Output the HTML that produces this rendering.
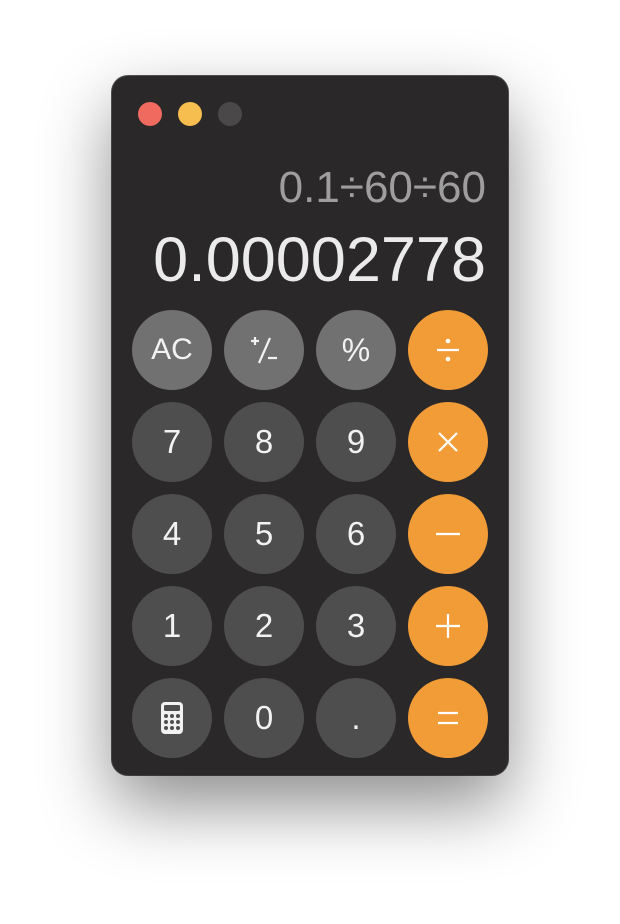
<!DOCTYPE html>
<html><head><style>
body{margin:0;width:620px;height:924px;background:#fff;position:relative;overflow:hidden;font-family:"Liberation Sans",sans-serif}
.win{position:absolute;left:112px;top:76px;width:396px;height:699px;background:#2a2829;border-radius:16px;box-shadow:0 30px 70px rgba(0,0,0,.45),0 0 0 1px #555;}
.tl{position:absolute;top:102px;width:24px;height:24px;border-radius:50%}
.b{position:absolute;width:80px;height:80px;border-radius:50%;background:#4f4e4f;color:#f2f2f2;font-size:33px;display:flex;align-items:center;justify-content:center}
.g{background:#727172}.o{background:#f29c38}
.t{position:absolute;right:134px;white-space:nowrap;text-align:right}
</style></head><body>
<div class="win"></div>
<div class="tl" style="left:138px;background:#f06a5f"></div>
<div class="tl" style="left:178px;background:#f6be4f"></div>
<div class="tl" style="left:218px;background:#4a4849"></div>
<div class="t" style="top:163px;font-size:44px;color:#9f9e9f">0.1÷60÷60</div>
<div class="t" style="top:224px;font-size:63px;color:#ebebeb">0.00002778</div>

<div class="b g" style="left:132px;top:310px;font-size:30px">AC</div>
<div class="b g" style="left:224px;top:310px"><svg width="40" height="40" viewBox="0 0 40 40" stroke="#f2f2f2" stroke-width="2.2" fill="none"><path d="M7 11h8M11 7v8M26 8L15 33M24 28h9"/></svg></div>
<div class="b g" style="left:316px;top:310px;font-size:32px">%</div>
<div class="b o" style="left:408px;top:310px"><svg width="40" height="40" viewBox="0 0 40 40"><path d="M9 20h22" stroke="#fff" stroke-width="2.2"/><circle cx="20" cy="11" r="2.3" fill="#fff"/><circle cx="20" cy="29" r="2.3" fill="#fff"/></svg></div>

<div class="b" style="left:132px;top:402px">7</div>
<div class="b" style="left:224px;top:402px">8</div>
<div class="b" style="left:316px;top:402px">9</div>
<div class="b o" style="left:408px;top:402px"><svg width="40" height="40" viewBox="0 0 40 40" stroke="#fff" stroke-width="2.2"><path d="M11 11l18 18M29 11L11 29"/></svg></div>

<div class="b" style="left:132px;top:494px">4</div>
<div class="b" style="left:224px;top:494px">5</div>
<div class="b" style="left:316px;top:494px">6</div>
<div class="b o" style="left:408px;top:494px"><svg width="40" height="40" viewBox="0 0 40 40" stroke="#fff" stroke-width="2.2"><path d="M8 20h24"/></svg></div>

<div class="b" style="left:132px;top:586px">1</div>
<div class="b" style="left:224px;top:586px">2</div>
<div class="b" style="left:316px;top:586px">3</div>
<div class="b o" style="left:408px;top:586px"><svg width="40" height="40" viewBox="0 0 40 40" stroke="#fff" stroke-width="2.2"><path d="M8 20h24M20 8v24"/></svg></div>

<div class="b" style="left:132px;top:678px"><svg width="24" height="34" viewBox="0 0 24 34"><rect x="1" y="1" width="22" height="32" rx="4" fill="#f2f2f2"/><rect x="4" y="4" width="16" height="6" rx="1.5" fill="#4f4e4f"/><g fill="#4f4e4f"><circle cx="6" cy="15" r="2"/><circle cx="12" cy="15" r="2"/><circle cx="18" cy="15" r="2"/><circle cx="6" cy="21" r="2"/><circle cx="12" cy="21" r="2"/><circle cx="18" cy="21" r="2"/><circle cx="6" cy="27" r="2"/><circle cx="12" cy="27" r="2"/><circle cx="18" cy="27" r="2"/></g></svg></div>
<div class="b" style="left:224px;top:678px">0</div>
<div class="b" style="left:316px;top:678px">.</div>
<div class="b o" style="left:408px;top:678px"><svg width="40" height="40" viewBox="0 0 40 40" stroke="#fff" stroke-width="2.2"><path d="M10 15h20M10 25h20"/></svg></div>
</body></html>
